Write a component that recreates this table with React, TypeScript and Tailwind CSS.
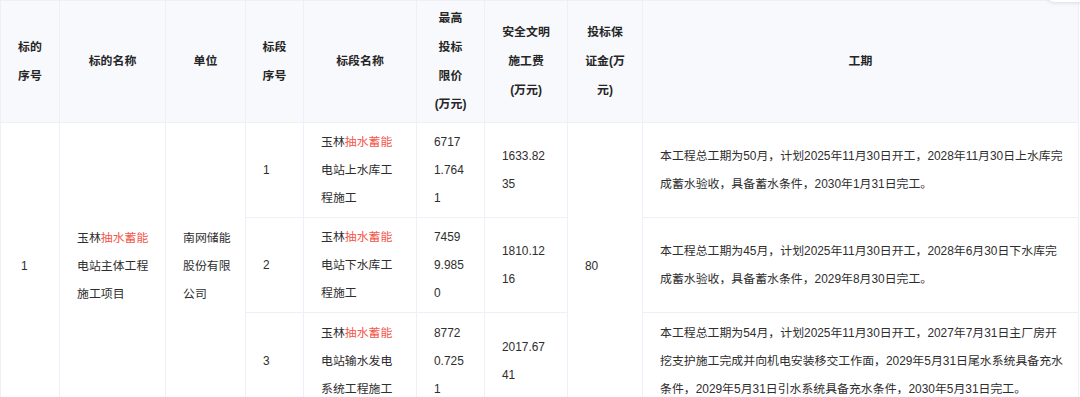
import type { ReactNode } from 'react'

type Seg = { lines: ReactNode[] }

const Red = ({ children }: { children: ReactNode }) => <span className="text-[#f5574b]">{children}</span>

const yulin = (
  <>
    玉林<Red>抽水蓄能</Red>
  </>
)

const sections = [
  {
    no: '1',
    name: [yulin, '电站上水库工', '程施工'],
    price: ['6717', '1.764', '1'],
    safety: ['1633.82', '35'],
    period: [
      '本工程总工期为50月，计划2025年11月30日开工，2028年11月30日上水库完',
      '成蓄水验收，具备蓄水条件，2030年1月31日完工。',
    ],
  },
  {
    no: '2',
    name: [yulin, '电站下水库工', '程施工'],
    price: ['7459', '9.985', '0'],
    safety: ['1810.12', '16'],
    period: [
      '本工程总工期为45月，计划2025年11月30日开工，2028年6月30日下水库完',
      '成蓄水验收，具备蓄水条件，2029年8月30日完工。',
    ],
  },
  {
    no: '3',
    name: [yulin, '电站输水发电', '系统工程施工'],
    price: ['8772', '0.725', '1'],
    safety: ['2017.67', '41'],
    period: [
      '本工程总工期为54月，计划2025年11月30日开工，2027年7月31日主厂房开',
      '挖支护施工完成并向机电安装移交工作面，2029年5月31日尾水系统具备充水',
      '条件，2029年5月31日引水系统具备充水条件，2030年5月31日完工。',
    ],
  },
]

function Lines({ lines }: Seg) {
  return (
    <>
      {lines.map((l, i) => (
        <div key={i} className="whitespace-nowrap">
          {l}
        </div>
      ))}
    </>
  )
}

const th = 'border border-[#edf0f8] bg-[#f8f9fc] font-bold text-[#262626] text-center align-middle leading-[28.7px] px-1'
const td = 'border border-[#edf0f8] bg-white text-left align-middle leading-[28px] pl-[17px] pr-1'

export default function App() {
  return (
    <div
      className="relative h-[397px] w-[1080px] overflow-hidden bg-white text-[11.9px] text-[#2e2e2e]"
      style={{ fontFamily: '"Liberation Sans", "Noto Sans CJK SC", sans-serif' }}
    >
      <table className="w-[1078px] table-fixed border-collapse">
        <colgroup>
          <col className="w-[59px]" />
          <col className="w-[106px]" />
          <col className="w-[80px]" />
          <col className="w-[58px]" />
          <col className="w-[113px]" />
          <col className="w-[68px]" />
          <col className="w-[83px]" />
          <col className="w-[75px]" />
          <col className="w-[436px]" />
        </colgroup>
        <thead>
          <tr className="h-[122px]">
            <th className={th}>
              <Lines lines={['标的', '序号']} />
            </th>
            <th className={th}>标的名称</th>
            <th className={th}>单位</th>
            <th className={th}>
              <Lines lines={['标段', '序号']} />
            </th>
            <th className={th}>标段名称</th>
            <th className={th}>
              <Lines lines={['最高', '投标', '限价', '(万元)']} />
            </th>
            <th className={th}>
              <Lines lines={['安全文明', '施工费', '(万元)']} />
            </th>
            <th className={th}>
              <Lines lines={['投标保', '证金(万', '元)']} />
            </th>
            <th className={th}>工期</th>
          </tr>
        </thead>
        <tbody>
          {sections.map((s, i) => (
            <tr key={s.no} className={i === 2 ? 'h-[96px]' : 'h-[95px]'}>
              {i === 0 && (
                <>
                  <td rowSpan={3} className={`${td} pl-[20px]`}>
                    1
                  </td>
                  <td rowSpan={3} className={td}>
                    <Lines lines={[yulin, '电站主体工程', '施工项目']} />
                  </td>
                  <td rowSpan={3} className={td}>
                    <Lines lines={['南网储能', '股份有限', '公司']} />
                  </td>
                </>
              )}
              <td className={td}>{s.no}</td>
              <td className={td}>
                <Lines lines={s.name} />
              </td>
              <td className={td}>
                <Lines lines={s.price} />
              </td>
              <td className={td}>
                <Lines lines={s.safety} />
              </td>
              {i === 0 && (
                <td rowSpan={3} className={td}>
                  80
                </td>
              )}
              <td className={td}>
                <Lines lines={s.period} />
              </td>
            </tr>
          ))}
        </tbody>
      </table>
      <div className="absolute right-[-6px] top-[-31px] h-[33px] w-[38px] rounded-md bg-white shadow-[0_1px_4px_rgba(0,0,0,0.12)]" />
    </div>
  )
}
